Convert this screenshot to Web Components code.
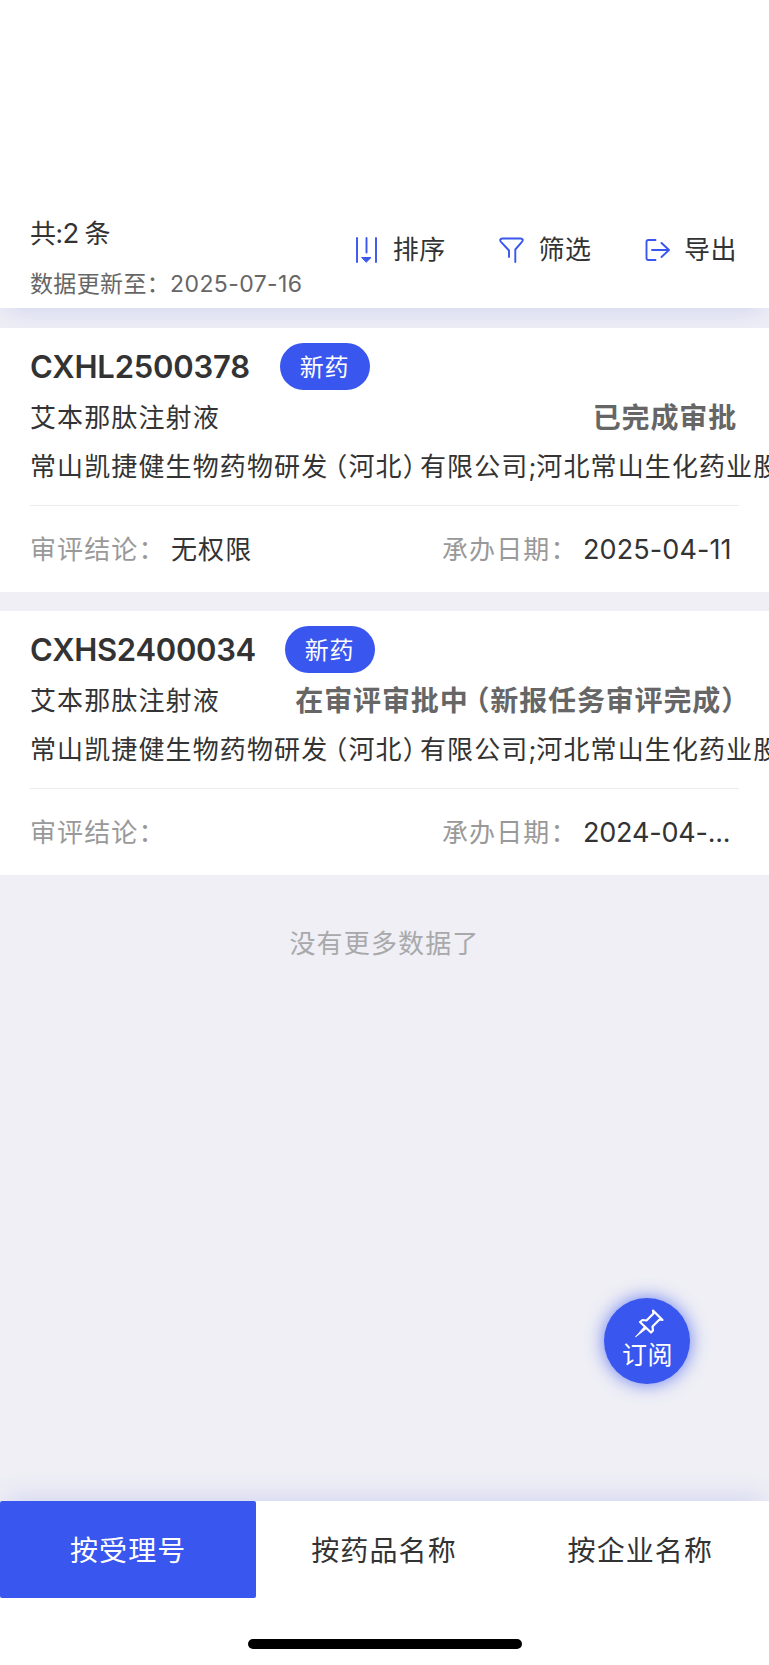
<!DOCTYPE html>
<html lang="zh-CN">
<head>
<meta charset="utf-8">
<title>药品审评</title>
<style>
html,body{margin:0;height:100%;overflow:hidden}
body{font-family:Inter,"Noto Sans CJK SC",sans-serif;color:#333;background:#efeff5;font-size:26px}
</style>
</head>
<body>
<review-page></review-page>
<script>
function define(name, html, init) {
  const t = document.createElement('template');
  t.innerHTML = html;
  customElements.define(name, class extends HTMLElement {
    connectedCallback() {
      if (this.shadowRoot) return;
      const root = this.attachShadow({ mode: 'open' });
      root.append(t.content.cloneNode(true));
      if (init) init(this, root);
    }
  });
}

define('tool-action', `
<style>
:host{display:flex;align-items:center;line-height:40px;letter-spacing:.5px;white-space:nowrap}
::slotted(svg){display:block;width:28px;height:28px;margin-top:-1px;fill:none;stroke:#3956ee;stroke-width:1.9;stroke-linecap:round;stroke-linejoin:round}
.label{margin-left:12.200px}
</style><slot name="icon"></slot><span class="label"><slot></slot></span>`);

define('result-header', `
<style>
:host{display:flex;justify-content:space-between;box-sizing:border-box;height:308px;padding:213px 30px 0;background:#fff;box-shadow:0 10px 24px -6px rgba(72,92,225,.17)}
.info{display:flex;flex-direction:column}
.count{line-height:40px;letter-spacing:-.5px;word-spacing:-1px}
.count b{font-weight:400;font-size:27.500px}
.date{margin-top:10px;line-height:40px;font-size:23px;letter-spacing:.35px;color:#666;white-space:nowrap}
.date b{font-weight:400;letter-spacing:.4px}
.actions{display:flex;gap:52.400px;height:40px;margin-top:17px;margin-right:2px}
</style>
<div class="info"><div class="count">共:<b>2</b> 条</div><div class="date">数据更新至：<b>2025-07-16</b></div></div>
<div class="actions">
<tool-action><svg slot="icon" viewBox="0 0 28 28"><path d="M4 2V26M13.500 2V16.500M23 2V26" /><path d="M9 21.500H18L13.500 26Z" fill="#3956ee" stroke-width="1"/></svg>排序</tool-action>
<tool-action><svg slot="icon" viewBox="0 0 28 28"><path d="M11 21V14.500L3.200 6.200C1.500 4.300 2 2.500 4.500 2.500H22.500C25 2.500 25.500 4.300 23.700 6.200L17.300 13.500V26"/></svg>筛选</tool-action>
<tool-action><svg slot="icon" viewBox="0 0 28 28"><path d="M11.500 4H4.500Q2.500 4 2.500 6V22Q2.500 24 4.500 24H11.500M8 14H25M17.500 7L25 14L17.500 21"/></svg>导出</tool-action>
</div>`);

define('kind-badge', `
<style>:host{display:block;box-sizing:border-box;width:90px;height:47px;padding-right:1px;border-radius:23.500px;background:#3956ee;color:#fff;font-size:24px;line-height:49px;text-align:center;letter-spacing:.6px}</style><slot></slot>`);

define('review-card', `
<style>
:host{display:block;box-sizing:border-box;height:264px;padding:15px 30px 0;background:#fff;overflow:hidden}
.row{display:flex;white-space:nowrap}
.head{align-items:center;height:47px}
.code{font-size:31px;font-weight:600;letter-spacing:-.2px}
kind-badge{margin-left:30px}
:host([paren]) .code{letter-spacing:-.3px}
:host([paren]) kind-badge{margin-left:29px}
.name{justify-content:space-between;height:40px;line-height:40px;margin-top:8px;letter-spacing:1.120px}
.status{font-size:28px;font-weight:700;letter-spacing:.85px;color:#666;margin-right:2px}
:host([paren]) .status{margin-right:-11px}
.firm{height:40px;line-height:40px;margin-top:9px;letter-spacing:1.120px}
.foot{border-top:1px solid #ececec;margin-top:18px;padding-top:23px;line-height:41px}
.left{width:412px;display:flex}
.right{display:flex}
.k{width:141px;color:#999;letter-spacing:1.120px}
.k span{margin-left:-2px}
.v{font-size:27px;letter-spacing:.1px}
:host([paren]) .date{letter-spacing:-.2px}
.v.han{font-size:26px;letter-spacing:1.120px}
i{font-style:normal;letter-spacing:-5.850px}
i.close{letter-spacing:-8.800px}
i.semi{letter-spacing:0}
</style>
<div class="row head"><span class="code"></span><kind-badge>新药</kind-badge></div>
<div class="row name"><span>艾本那肽注射液</span><span class="status"><slot></slot></span></div>
<div class="row firm"><span>常山凯捷健生物药物研<i>发</i>（河北<i class="close">）</i>有限公司<i class="semi">;</i>河北常山生化药业股</span></div>
<div class="row foot"><span class="left"><span class="k">审评结论：</span><span class="v han result"></span></span><span class="right"><span class="k">承办日期：</span><span class="v date"></span></span></div>`,
(host, root) => {
  root.querySelector('.code').textContent = host.getAttribute('code');
  root.querySelector('.result').textContent = host.getAttribute('result') || '';
  root.querySelector('.date').textContent = host.getAttribute('date');
});

define('subscribe-button', `
<style>
:host{position:absolute;left:604px;top:1298px;width:86px;height:86px;border-radius:50%;background:#3956ee;color:#fff;box-shadow:0 0 18px rgba(57,86,238,.75);display:flex;flex-direction:column;align-items:center}
svg{width:32px;height:32px;margin-top:10px;margin-left:6px;fill:none;stroke:#fff;stroke-width:2.2;stroke-linejoin:round;stroke-linecap:round}
span{font-size:25px;line-height:32px;letter-spacing:.5px;margin-top:-1px;margin-left:1px}
</style>
<svg viewBox="0 0 32 32"><path d="M19 2.500L28.500 12L25.500 11.500L18.500 18.500L19 22.500L17 24.500L6 14L8.500 12L12.500 12.500L19.500 5.500Z"/><path d="M10.500 18.500L1.500 29L12.500 20.500Z" fill="#fff" stroke-width=".8"/></svg><span>订阅</span>`);

define('tab-item', `
<style>
:host{flex:1;height:97px;line-height:100px;text-align:center;font-size:28px;letter-spacing:1.100px;text-indent:-1px}
:host([active]){background:#3956ee;color:#fff;border-radius:2px;text-indent:0}
</style><slot></slot>`);

define('tab-bar', `
<style>
:host{display:block;height:164px;background:#fff;box-shadow:0 -10px 24px -6px rgba(72,92,225,.17)}
.tabs{display:flex}
.home{width:274px;height:10px;border-radius:5px;background:#000;margin:41px auto 0}
</style>
<div class="tabs"><slot></slot></div><div class="home"></div>`);

define('review-page', `
<style>
:host{display:flex;flex-direction:column;position:relative;width:769px;height:1665px;background:#efeff5;overflow:hidden}
.list{display:flex;flex-direction:column;gap:19px;margin-top:20px;position:relative;z-index:1}
.end{text-align:center;color:#a9a9ab;line-height:40px;letter-spacing:1.150px;margin-top:49px}
tab-bar{margin-top:auto}
subscribe-button{z-index:2}
i{font-style:normal;letter-spacing:-6.150px}
</style>
<result-header></result-header>
<div class="list">
<review-card code="CXHL2500378" result="无权限" date="2025-04-11">已完成审批</review-card>
<review-card paren code="CXHS2400034" date="2024-04-...">在审评审批<i>中</i>（新报任务审评完成）</review-card>
</div>
<div class="end">没有更多数据了</div>
<tab-bar><tab-item active>按受理号</tab-item><tab-item>按药品名称</tab-item><tab-item>按企业名称</tab-item></tab-bar>
<subscribe-button></subscribe-button>`);
</script>
</body>
</html>
